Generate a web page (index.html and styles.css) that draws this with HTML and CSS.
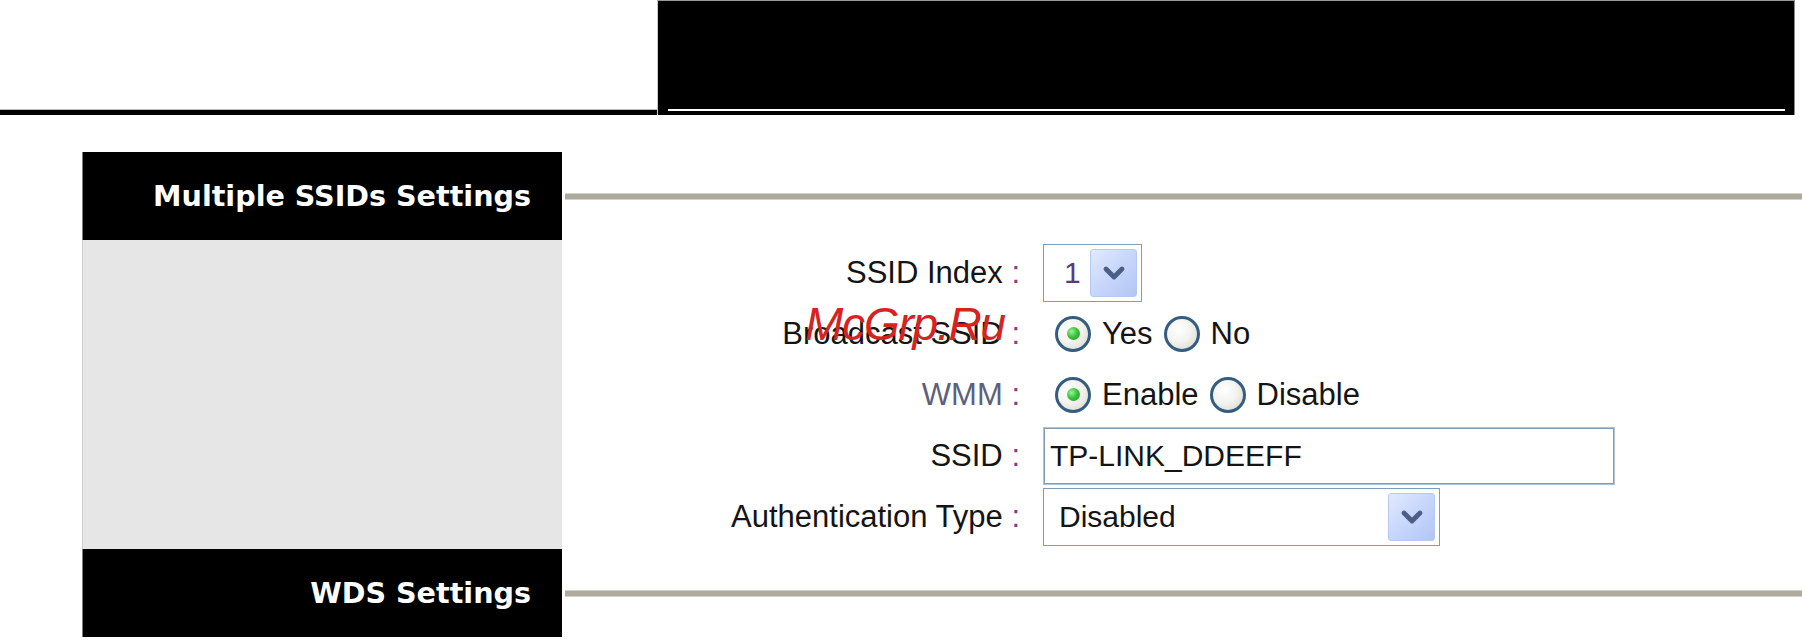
FILE: index.html
```html
<!DOCTYPE html>
<html lang="en">
<head>
<meta charset="utf-8">
<title>Multiple SSIDs Settings</title>
<link rel="stylesheet" href="styles.css">
</head>
<body>
<div class="page">
  <div class="top">
    <div class="top-rule"></div>
    <div class="top-box"><div class="top-inner"></div></div>
  </div>

  <div class="panel">
    <div class="sec-head">
      <div class="sec-title">Multiple SSIDs Settings</div>
      <div class="sec-line"></div>
    </div>

    <div class="sec-body">
      <div class="side"></div>
      <div class="form">
        <div class="label">SSID Index <span class="colon">:</span></div>
        <div class="ctl">
          <div class="select small">
            <span class="val num">1</span>
            <span class="btn"><svg width="24" height="18" viewBox="0 0 24 18"><polyline points="4,5 12,13 20,5" fill="none" stroke="#4a5e86" stroke-width="4.8" stroke-linecap="round" stroke-linejoin="round"/></svg></span>
          </div>
        </div>

        <div class="label">Broadcast SSID <span class="colon">:</span></div>
        <div class="ctl radios">
          <span class="radio on"></span><span class="opt">Yes</span>
          <span class="radio"></span><span class="opt">No</span>
        </div>

        <div class="label light">WMM <span class="colon">:</span></div>
        <div class="ctl radios">
          <span class="radio on"></span><span class="opt">Enable</span>
          <span class="radio"></span><span class="opt">Disable</span>
        </div>

        <div class="label">SSID <span class="colon">:</span></div>
        <div class="ctl">
          <div class="input">TP-LINK_DDEEFF</div>
        </div>

        <div class="label">Authentication Type <span class="colon">:</span></div>
        <div class="ctl">
          <div class="select wide">
            <span class="val">Disabled</span>
            <span class="btn"><svg width="24" height="18" viewBox="0 0 24 18"><polyline points="4,5 12,13 20,5" fill="none" stroke="#4a5e86" stroke-width="4.8" stroke-linecap="round" stroke-linejoin="round"/></svg></span>
          </div>
        </div>
      </div>
    </div>

    <div class="sec-head">
      <div class="sec-title">WDS Settings</div>
      <div class="sec-line"></div>
    </div>
  </div>

  <div class="watermark">McGrp.Ru</div>
</div>
</body>
</html>
```

FILE: styles.css
```css
html, body {
  margin: 0;
  padding: 0;
  height: 641px;
  overflow: hidden;
  background: #ffffff;
}

body {
  font-family: "Liberation Sans", Arial, sans-serif;
  color: #111111;
}

.page {
  position: relative;
  width: 1802px;
  height: 641px;
}

/* top banner */
.top {
  display: flex;
  align-items: flex-end;
  height: 115px;
}

.top-rule {
  width: 657px;
  height: 6px;
  background: #000;
  border-top: 1px solid #bdbdbd;
  box-sizing: border-box;
}

.top-box {
  width: 1138px;
  height: 115px;
  box-sizing: border-box;
  background: #000;
  border-top: 1px solid #9a9a9a;
  border-right: 1px solid #8a8a8a;
  border-left: 1px solid #c8c8c8;
  display: flex;
  align-items: flex-end;
  padding: 0 9px 4px 10px;
}

.top-inner {
  flex: 1;
  height: 2px;
  background: #ffffff;
}

/* panel */
.panel {
  margin-top: 37px;
  padding-left: 82px;
}

.sec-head {
  display: flex;
  align-items: center;
  height: 88px;
}

.sec-title {
  width: 480px;
  height: 88px;
  box-sizing: border-box;
  background: #000;
  color: #ffffff;
  font-family: "DejaVu Sans", Verdana, sans-serif;
  font-weight: bold;
  font-size: 28.6px;
  display: flex;
  align-items: center;
  justify-content: flex-end;
  padding-right: 31px;
  padding-bottom: 1px;
  border-left: 1px solid #7a7a7a;
}

.sec-line {
  flex: 1;
  height: 7px;
  margin-left: 3px;
  box-sizing: border-box;
  background: #aeab9c;
  border-top: 1px solid #d4d2c7;
  border-bottom: 1px solid #d4d2c7;
}

.sec-body {
  display: flex;
  height: 309px;
}

.side {
  width: 480px;
  background: #e6e6e6;
  border-left: 1px solid #cfcfcf;
  box-sizing: border-box;
}

.form {
  flex: 1;
  padding-top: 2px;
  display: grid;
  grid-template-columns: 458px auto;
  grid-auto-rows: 61px;
  column-gap: 23px;
  align-items: center;
  align-content: start;
}

.label {
  text-align: right;
  font-size: 31px;
  color: #141414;
  white-space: nowrap;
}

.label.light {
  color: #5e5f7c;
}

.colon {
  color: #7b3f8c;
}

.ctl {
  display: flex;
  align-items: center;
  font-size: 31px;
}

/* select boxes */
.select {
  height: 58px;
  box-sizing: border-box;
  border: 1px solid #7f9db9;
  background: #ffffff;
  display: flex;
  align-items: stretch;
  justify-content: space-between;
  padding: 4px;
}

.select.small { width: 99px; }
.select.wide { width: 397px; }

.select .val {
  display: flex;
  align-items: center;
  padding-left: 11px;
  color: #141414;
  font-size: 30px;
}

.select .val.num {
  color: #5b3a7a;
  padding-left: 16px;
}

.btn {
  width: 47px;
  box-sizing: border-box;
  border: 1px solid #b6c9f4;
  border-radius: 3px;
  background: linear-gradient(135deg, #e1eafe 0%, #c7d6fb 50%, #b2c6f4 100%);
  display: flex;
  align-items: center;
  justify-content: center;
}

/* text input */
.input {
  width: 572px;
  height: 58px;
  box-sizing: border-box;
  border: 1px solid #b4c3d4;
  box-shadow: inset 0 0 0 1px #7f9db9;
  background: #ffffff;
  display: flex;
  align-items: center;
  padding-left: 6px;
  color: #141414;
  font-size: 30px;
}

/* radio buttons */
.radios {
  padding-left: 12px;
}

.radio {
  width: 36px;
  height: 36px;
  box-sizing: border-box;
  border-radius: 50%;
  border: 3px solid #355d80;
  background: radial-gradient(circle at 38% 35%, #ffffff 0%, #f3f3ef 45%, #d6d6cf 100%);
  display: flex;
  align-items: center;
  justify-content: center;
  margin-right: 11px;
  flex: none;
}

.radio.on::after {
  content: "";
  width: 13px;
  height: 13px;
  border-radius: 50%;
  background: radial-gradient(circle at 35% 35%, #9af59a 0%, #3cc43c 45%, #1f8f2a 100%);
}

.opt {
  margin-right: 11px;
  color: #141414;
}

/* watermark overlay */
.watermark {
  position: absolute;
  left: 805px;
  top: 301px;
  font-family: "Liberation Sans", Arial, sans-serif;
  font-style: italic;
  font-size: 46px;
  line-height: 46px;
  letter-spacing: -1.2px;
  color: #d6231f;
  white-space: nowrap;
}
```
